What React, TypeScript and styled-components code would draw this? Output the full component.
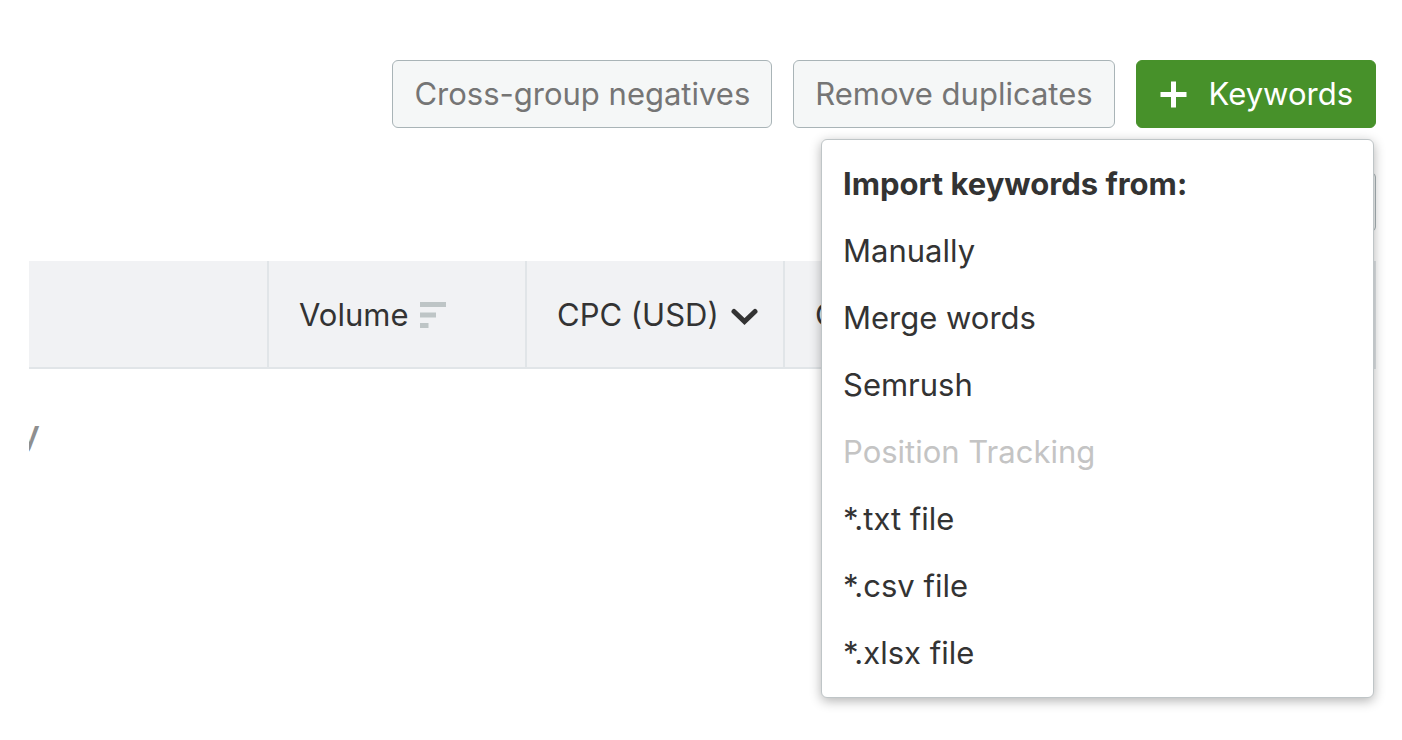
import React from 'react';
import styled, { createGlobalStyle } from 'styled-components';

const GlobalStyle = createGlobalStyle`
  *, *::before, *::after { box-sizing: border-box; }
  body {
    margin: 0;
    background: #fff;
    color: #333;
    font-family: Inter, "Liberation Sans", sans-serif;
    font-size: 31px;
    line-height: 40px;
  }
  button { font: inherit; cursor: pointer; }
`;

const Page = styled.main`
  min-height: 100vh;
  padding: 60px 26px 40px 29px;
`;

const Toolbar = styled.div`
  display: flex;
  justify-content: flex-end;
  gap: 21px;
`;

const Button = styled.button<{ $primary?: boolean }>`
  display: flex;
  align-items: center;
  gap: 22px;
  height: 68px;
  padding: 0 ${(p) => (p.$primary ? '22px' : '21px')};
  border: 1px solid ${(p) => (p.$primary ? '#47912a' : '#a9b4b7')};
  border-radius: 6px;
  background: ${(p) => (p.$primary ? '#47912a' : '#f5f7f7')};
  color: ${(p) => (p.$primary ? '#fff' : '#757575')};
  white-space: nowrap;
`;

const MenuAnchor = styled.div`
  position: relative;
`;

const Menu = styled.div`
  position: absolute;
  z-index: 1;
  top: calc(100% + 11px);
  right: 2px;
  width: 553px;
  padding: 10px 0 11px;
  border: 1px solid #bfc5c7;
  border-radius: 6px;
  background: #fff;
  box-shadow: 0 3px 12px rgba(0, 0, 0, 0.3);
`;

const MenuTitle = styled.h2`
  margin: 0;
  padding: 0 21px;
  font-size: 31px;
  font-weight: 700;
  line-height: 67px;
`;

const MenuItem = styled.button`
  display: block;
  width: 100%;
  padding: 0 21px;
  border: 0;
  background: none;
  color: #333;
  line-height: 67px;
  text-align: left;
  &:disabled { color: #c4c4c4; cursor: default; }
`;

const FilterRow = styled.div`
  display: flex;
  justify-content: flex-end;
  margin: 45px 0 30px;
`;

const FilterButton = styled.button`
  width: 68px;
  height: 58px;
  border: 1px solid #a9b4b7;
  border-radius: 4px;
  background: #f5f7f7;
`;

const Table = styled.table`
  width: 100%;
  table-layout: fixed;
  border-collapse: separate;
  border-spacing: 0;
`;

const HeadCell = styled.th<{ $width?: number }>`
  width: ${(p) => (p.$width ? `${p.$width}px` : 'auto')};
  height: 108px;
  padding: 2px 0 0 30px;
  border-right: 2px solid #e1e5e8;
  border-bottom: 2px solid #e1e5e8;
  background: #f1f2f4;
  font-weight: 400;
  text-align: left;
  white-space: nowrap;
`;

const HeadLabel = styled.span`
  display: flex;
  align-items: center;
  gap: 12px;
`;

const EmptyCell = styled.td`
  padding: 40px 0 0;
`;

const EmptyNote = styled.div`
  display: flex;
  justify-content: flex-end;
  width: 11px;
  overflow: hidden;
  color: #8f8f8f;
  font-size: 36px;
  font-weight: 500;
  line-height: 48px;
`;

const PlusIcon = () => (
  <svg width="28" height="28" viewBox="0 0 28 28" aria-hidden="true">
    <path d="M14.500 1.500v26M1.500 14.500h26" stroke="#fff" strokeWidth="5" fill="none" />
  </svg>
);

const SortIcon = () => (
  <svg width="26" height="26" viewBox="0 0 26 26" aria-hidden="true">
    <path d="M0 0h26v5H0zM0 10.500h16v5H0zM0 21h8.500v5H0z" fill="#bec5c6" />
  </svg>
);

const ChevronIcon = () => (
  <svg width="28" height="28" viewBox="0 0 28 28" aria-hidden="true">
    <path d="M3 10.500L13.500 20.500L24 10.500" stroke="#333" strokeWidth="5" strokeLinecap="round" fill="none" />
  </svg>
);

const sources = [
  { label: 'Manually' },
  { label: 'Merge words' },
  { label: 'Semrush' },
  { label: 'Position Tracking', disabled: true },
  { label: '*.txt file' },
  { label: '*.csv file' },
  { label: '*.xlsx file' },
];

export default function App() {
  return (
    <>
      <GlobalStyle />
      <Page>
        <Toolbar>
          <Button type="button">Cross-group negatives</Button>
          <Button type="button">Remove duplicates</Button>
          <MenuAnchor>
            <Button type="button" $primary aria-haspopup="menu" aria-expanded="true">
              <PlusIcon />
              Keywords
            </Button>
            <Menu role="menu" aria-labelledby="import-title">
              <MenuTitle id="import-title">Import keywords from:</MenuTitle>
              {sources.map((s) => (
                <MenuItem key={s.label} type="button" role="menuitem" disabled={s.disabled}>
                  {s.label}
                </MenuItem>
              ))}
            </Menu>
          </MenuAnchor>
        </Toolbar>
        <FilterRow>
          <FilterButton type="button" aria-label="Filters" />
        </FilterRow>
        <Table>
          <thead>
            <tr>
              <HeadCell $width={240} aria-label="Keyword" />
              <HeadCell $width={258}>
                <HeadLabel>
                  Volume
                  <SortIcon />
                </HeadLabel>
              </HeadCell>
              <HeadCell $width={258}>
                <HeadLabel>
                  CPC (USD)
                  <ChevronIcon />
                </HeadLabel>
              </HeadCell>
              <HeadCell>C</HeadCell>
            </tr>
          </thead>
          <tbody>
            <tr>
              <EmptyCell colSpan={4}>
                <EmptyNote>y</EmptyNote>
              </EmptyCell>
            </tr>
          </tbody>
        </Table>
      </Page>
    </>
  );
}
